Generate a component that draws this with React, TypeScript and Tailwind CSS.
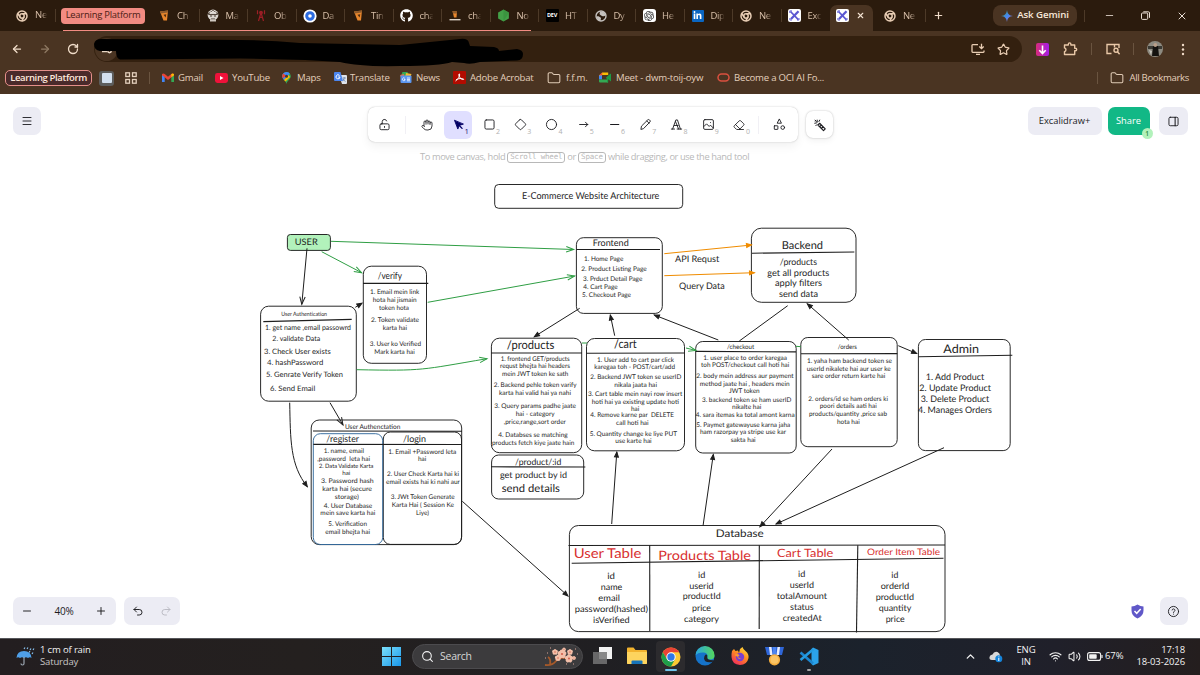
import React from "react";
import { FaGithub, FaLinkedinIn } from "react-icons/fa";
import { SiOpenai } from "react-icons/si";
import {
  ArrowLeft, ArrowRight, RotateCw, Star, X, Plus, Minus, Folder, Search, Wifi, Volume2, ChevronUp,
  Hand, Eraser, Undo2, Redo2, Menu,
} from "lucide-react";

const UI = "font-['Open_Sans','Noto_Sans',sans-serif]";

/* ---------- browser icons ---------- */

const ChromeMono = () => (
  <svg width="12" height="12" viewBox="0 0 24 24" fill="none" stroke="#e8cdb4" strokeWidth="3">
    <circle cx="12" cy="12" r="10" />
    <circle cx="12" cy="12" r="4.4" />
    <path d="M12 7.4H21M8 14.2 3.4 6.6M16 14.4 11.5 22" />
  </svg>
);

const Cup = () => (
  <svg width="11" height="13" viewBox="0 0 11 13">
    <path d="M1 2.500 9 1.500 8 11.500H4.500Z" fill="#e8862c" />
    <path d="M1 2.500 9 1.500 8.800 3.600 1.600 4.500Z" fill="#8d5a2c" />
    <path d="M4.500 5.800 7.300 5.300 6.600 8.500Z" fill="#4f2d10" />
  </svg>
);

const Face = () => (
  <svg width="12" height="13" viewBox="0 0 12 13">
    <circle cx="6" cy="6" r="5.4" fill="#d9d4ce" />
    <path d="M1 5 6 1.500l5 3.500-2 .6H3zM3 7h2M7 7h2M4 10h4" stroke="#493d33" fill="none" strokeWidth="1" />
    <path d="M3 4 6 2.500 9 4" stroke="#f2eee8" fill="none" />
    <path d="M3 11.500h6" stroke="#cfc8c0" strokeWidth="2" />
  </svg>
);

const Tower = () => (
  <svg width="12" height="13" viewBox="0 0 12 13" fill="none" stroke="#9c1f26" strokeWidth="1.200">
    <path d="M6 3.500 3.500 12M6 3.500 8.500 12M4.500 8.400h3M2.500 1.200v4M9.500 1.200v4" />
    <circle cx="6" cy="3.600" r="1.300" fill="#9c1f26" />
  </svg>
);

const BlueRing = () => (
  <svg width="14" height="14" viewBox="0 0 14 14">
    <circle cx="7" cy="7" r="6.600" fill="#fff" />
    <circle cx="7" cy="7" r="3.300" fill="#fff" stroke="#2b6be0" strokeWidth="3" />
  </svg>
);

const Lamp = () => (
  <svg width="12" height="12" viewBox="0 0 12 12">
    <path d="M3.500 1 8 1.500 7.500 7.500H5z" fill="#e8862c" />
    <path d="M3.500 1 8 1.500v2H4z" fill="#8d5a2c" />
    <path d="M.5 9.700h11" stroke="#d9cfc5" strokeWidth="1.400" />
  </svg>
);

const NodeHex = () => (
  <svg width="13" height="13" viewBox="0 0 13 13">
    <path d="m6.500.4 5.400 3v6.200l-5.400 3-5.400-3V3.400z" fill="#43a047" />
    <path d="m6.500.4 5.400 3-5.400 9.200z" fill="#388e3c" opacity=".7" />
  </svg>
);

const DevLogo = () => (
  <span className="flex h-[13px] w-[13px] items-center justify-center rounded-[1px] bg-black text-[5.500px] font-bold leading-none tracking-[-0.2px] text-white">
    DEV
  </span>
);

const Globe = () => (
  <svg width="12" height="12" viewBox="0 0 12 12">
    <circle cx="6" cy="6" r="5" fill="none" stroke="#c5c1bd" strokeWidth="1.400" />
    <path d="M1.500 6.500C3 6 4.500 6.500 6 8l-.5 3Q2 10.500 1.500 6.500zM5 1.500 8.500 1.700 11 5Q9 7 7 6T4.500 4z" fill="#c5c1bd" />
  </svg>
);

const OpenAi = () => (
  <span className="flex h-[13px] w-[13px] items-center justify-center rounded-[3px] bg-white text-[#333]">
    <SiOpenai size={10} />
  </span>
);

const LinkedIn = () => (
  <span className="flex h-3 w-3 items-center justify-center rounded-[1px] bg-[#0a66c2] text-white">
    <FaLinkedinIn size={9} />
  </span>
);

const ExcalidrawLogo = () => (
  <span className="flex h-[13px] w-[13px] items-center justify-center rounded-[2px] bg-white">
    <svg width="11" height="11" viewBox="0 0 11 11" fill="none" stroke="#5b57d1">
      <path d="M1.500 1.500 9.300 9.600" strokeWidth="1.700" />
      <path d="M9.500 1.300 2 9" strokeWidth="2.300" />
      <path d="M.8 3V.9H3M8 10h2V8M.9 8v2H3" strokeWidth=".9" />
    </svg>
  </span>
);

const leadingTabs: [React.ReactNode, string][] = [
  [<Cup />, "Ch"], [<Face />, "Ma"], [<Tower />, "Ob"], [<BlueRing />, "Da"], [<Cup />, "Tin"],
  [<FaGithub size={13} color="#fff" />, "cha"], [<Lamp />, "cha"], [<NodeHex />, "No"], [<DevLogo />, "HT"],
  [<Globe />, "Dy"], [<OpenAi />, "He"], [<LinkedIn />, "Dip"], [<ChromeMono />, "Ne"], [<ExcalidrawLogo />, "Exc"],
];

function Tab({ icon, label, last }: { icon: React.ReactNode; label: string; last?: boolean }) {
  return (
    <div className={`flex h-[13px] w-[48.5px] shrink-0 items-center ${last ? "" : "border-r border-[#4d3a28]"}`}>
      <span className="flex w-[26px] justify-center">{icon}</span>
      <span className="w-[15px] whitespace-nowrap text-[9.500px] leading-[13px] tracking-[-0.350px] text-[#d9c0aa] [mask-image:linear-gradient(to_right,black_45%,transparent_90%)]">
        {label}
      </span>
    </div>
  );
}

function TabStrip() {
  return (
    <div className="relative flex h-[31px] items-center bg-[#2b1b0d]">
      <div className="flex h-[13px] w-[56px] items-center border-r border-[#4d3a28] pl-4">
        <ChromeMono />
        <span className="ml-[7px] text-[9.500px] tracking-[-0.2px] text-[#d9c0aa] [mask-image:linear-gradient(to_right,black_60%,transparent)]">Ne</span>
      </div>
      <div className="ml-[5px] flex h-4 w-[84px] items-center justify-center rounded-[4px] bg-[#f28b82] text-[9.400px] tracking-[-0.22px] text-[#4b1c14]">
        Learning Platform
      </div>
      <div className="ml-[6px] flex">
        {leadingTabs.map(([icon, label], i) => <Tab key={i} icon={icon} label={label} last={i === 13} />)}
      </div>
      <div className="flex h-[26px] w-[43px] shrink-0 items-center gap-[7px] self-end rounded-t-[7px] bg-[#4a3422] pb-[5px] pl-[6px]">
        <ExcalidrawLogo />
        <X size={9} color="#f4e3d3" strokeWidth={3} />
      </div>
      <div className="ml-1 flex"><Tab icon={<ChromeMono />} label="Ne" /></div>
      <Plus size={11} color="#f0dcc9" strokeWidth={2.600} className="ml-[7px] shrink-0" />
      <div className="ml-auto flex items-center">
        <div className="flex h-[21px] w-[84px] items-center justify-center gap-[4px] rounded-[8px] bg-[#4a3422] text-[9.700px] font-semibold tracking-[-0.1px] text-[#f8e8da]">
          <svg width="12" height="12" viewBox="0 0 12 12">
            <defs>
              <linearGradient id="gem" x1="0" y1="0" x2="1" y2="1">
                <stop offset=".1" stopColor="#3c9a63" /><stop offset=".5" stopColor="#4488f0" /><stop offset=".9" stopColor="#9b72cb" />
              </linearGradient>
            </defs>
            <path d="M6 0C6.500 3.800 8.200 5.500 12 6 8.200 6.500 6.500 8.200 6 12 5.500 8.200 3.800 6.500 0 6 3.800 5.500 5.500 3.800 6 0Z" fill="url(#gem)" />
          </svg>
          Ask Gemini
        </div>
        <span className="ml-[7px] h-3 w-px bg-[#4d3a28]" />
        <Minus size={11} color="#eadfd5" strokeWidth={1.800} className="ml-[19px]" />
        <svg width="9" height="9" viewBox="0 0 9 9" fill="none" stroke="#eadfd5" className="ml-[26px]">
          <rect x=".5" y="2" width="6.200" height="6.400" rx="1" /><path d="M2.300.8h5a1.200 1.200 0 0 1 1.200 1.200v4.800" />
        </svg>
        <X size={12} color="#eadfd5" strokeWidth={2} className="ml-[26px] mr-[12px]" />
      </div>
      <div className="absolute bottom-0 left-[63px] h-px w-[468px] bg-[#f28b82]" />
    </div>
  );
}

function AddressBar() {
  return (
    <div className="relative flex h-9 items-center bg-[#4a3422]">
      <ArrowLeft size={12} color="#f0dcc9" strokeWidth={2.500} className="ml-[11px]" />
      <ArrowRight size={12} color="#8d7863" strokeWidth={2.500} className="ml-4" />
      <RotateCw size={12} color="#f0dcc9" strokeWidth={2.600} className="ml-4" />
      <div className="ml-[15px] flex h-[26px] w-[928px] items-center rounded-full bg-[#33200f] pr-3">
        <span className="ml-[1px] flex h-[23px] w-[23px] items-center justify-center rounded-full bg-[#4a3422]">
          <svg width="12" height="10" viewBox="0 0 12 10" fill="none" stroke="#e8d6c4" strokeWidth="1.500">
            <path d="M1 2.500h5M1 7.500h2" /><circle cx="8.500" cy="2.500" r="1.500" /><circle cx="8.500" cy="7" r="1.700" /><path d="M3 7.500h3" />
          </svg>
        </span>
        <svg width="14" height="13" viewBox="0 0 14 13" fill="none" stroke="#e9cdb3" strokeWidth="1.300" className="ml-auto">
          <path d="M7 1.700H1.700Q1 1.700 1 2.400v6.200q0 .7.7.7h10.600q.7 0 .7-.7V7.500M5 11.300h4M10.500.8v4.700M8.300 3.500l2.200 2.200 2.200-2.200" />
        </svg>
        <Star size={13} color="#e9cdb3" strokeWidth={2.200} className="ml-3" />
      </div>
      <svg width="13" height="13" viewBox="0 0 13 13" className="ml-[14px]">
        <defs><linearGradient id="dl" x1="0" x2="1"><stop stopColor="#d72c7a" /><stop offset="1" stopColor="#a51de8" /></linearGradient></defs>
        <rect width="13" height="13" rx="2" fill="url(#dl)" />
        <path d="M6.500 2.500v8M3.300 7.200l3.200 3.300 3.200-3.300" stroke="#fff" strokeWidth="1.600" fill="none" />
      </svg>
      <svg width="15" height="14" viewBox="0 0 15 14" fill="none" stroke="#e9c8a8" strokeWidth="1.400" strokeLinejoin="round" className="ml-[14px]">
        <path d="M1.500 3h3.800V2.200a1.300 1.300 0 0 1 2.600 0V3h3.800v3.200h.7a1.300 1.300 0 0 1 0 2.600h-.7V12.500H1.500V9.600a1.900 1.900 0 0 0 0-3.700z" />
      </svg>
      <span className="ml-[13px] h-3 w-px bg-[#6a5440]" />
      <svg width="14" height="12" viewBox="0 0 14 12" fill="none" stroke="#e9c8a8" strokeWidth="1.400" className="ml-[14px]">
        <path d="M5.500 10.500H1V1.500h12V5M8.500 1.500v3" /><circle cx="10" cy="7.300" r="2" /><path d="m11.400 8.800 2.200 2.400" />
      </svg>
      <span className="ml-[13px] h-3 w-px bg-[#6a5440]" />
      <svg width="16" height="16" viewBox="0 0 16 16" className="ml-[13px]">
        <circle cx="8" cy="8" r="8" fill="#8d8a80" />
        <path d="M1 5h14v3H1z" fill="#3b3a34" /><path d="M6 5h5l1 10H5z" fill="#14120f" />
        <circle cx="8.300" cy="4" r="1.900" fill="#b99e88" /><path d="M2 9l3 1-1 4z" fill="#c9c6bd" />
      </svg>
      <svg width="4" height="13" viewBox="0 0 4 13" fill="#f0dcc9" className="ml-[18px]">
        <circle cx="2" cy="2" r="1.200" /><circle cx="2" cy="6.500" r="1.200" /><circle cx="2" cy="11" r="1.200" />
      </svg>
      <svg className="absolute left-0 top-0" width="530" height="36" viewBox="0 31 530 36">
        <path d="M94 44Q95 39 101 39L240 40Q270 40 300 43Q350 44 400 45L460 39Q468 38 469 43L470 46 494 47Q499 48 499 51L517 49Q523 50 523 54Q523 60 517 60.500L480 62Q470 65 464 63L452 62Q440 66 400 66Q360 67 340 62L305 60 240 58.500 120 59.500Q116 58 116 51L100 51Q94 50 94 44Z" fill="#000" />
      </svg>
    </div>
  );
}

const GmailIcon = () => (
  <svg width="12" height="10" viewBox="0 0 12 10">
    <path d="M0 1.500V9h2.700V3.500z" fill="#4285f4" /><path d="M12 1.500V9H9.300V3.500z" fill="#34a853" />
    <path d="M0 2.200V1.300Q1-.3 2.700 1L6 3.700 9.300 1Q11-.3 12 1.300v.9L6 6.900z" fill="#ea4335" /><path d="M9.300 1Q11-.3 12 1.300v.9L9.300 4.300z" fill="#fbbc04" />
  </svg>
);
const YouTubeIcon = () => (
  <svg width="13" height="10" viewBox="0 0 13 10"><rect width="13" height="10" rx="2.400" fill="#f0123a" /><path d="m5 3 3.500 2L5 7z" fill="#fff" /></svg>
);
const MapsIcon = () => (
  <svg width="9" height="12" viewBox="0 0 9 12">
    <path d="M4.500 12C4 8.500.2 7.500.2 4.300A4.300 4.300 0 0 1 8.800 4.300C8.800 7.500 5 8.500 4.500 12Z" fill="#34a853" />
    <path d="M1.200 1.600A4.300 4.300 0 0 1 7.700 1.500L2 8Q.2 6 .2 4.300q0-1.700 1-2.700z" fill="#4285f4" /><path d="M.2 4.300q0-1.700 1-2.700L4 3.500 1 6.500Z" fill="#ea4335" />
    <path d="M2 8 6.500 3 8 5 3.500 9.500z" fill="#fbbc04" /><circle cx="4.500" cy="4.200" r="1.500" fill="#4c3827" />
  </svg>
);
const TranslateIcon = () => (
  <svg width="13" height="12" viewBox="0 0 13 12">
    <path d="M5 3h7q1 0 1 1v7q0 1-1 1H8z" fill="#dfe3ea" /><path d="M1 0h5.500L9 9H1Q0 9 0 8V1Q0 0 1 0z" fill="#4b85ee" />
    <path d="M5.500 3.500A2 2 0 1 0 6 5H4.200" stroke="#fff" fill="none" /><path d="M8.500 6h3.500M10.200 5v1c0 1.500-.7 2.500-1.500 3.200M9.200 7c.5 1.200 1.300 2 2.300 2.500" stroke="#5b78a8" strokeWidth=".7" fill="none" />
  </svg>
);
const NewsIcon = () => (
  <svg width="12" height="11" viewBox="0 0 12 11">
    <path d="M2.500 0h5L9 4H1z" fill="#34a853" /><path d="m6 1 5.500 1L10 6H5z" fill="#f6b92b" /><path d="M0 3l4-1v4H1z" fill="#ea6b4a" />
    <rect x=".5" y="3.500" width="11" height="7.500" rx="1" fill="#5b95ee" /><path d="M4.800 6.300a1.400 1.400 0 1 0 .4 1.200H4M7 6h3M7 7.400h3M7 8.800h3" stroke="#fff" strokeWidth=".8" fill="none" />
  </svg>
);
const AcrobatIcon = () => (
  <svg width="13" height="13" viewBox="0 0 13 13"><rect width="13" height="13" rx="1" fill="#b30b00" /><path d="M2.500 10c1-.3 5-4.500 4-7-.7-.8-1 1-.3 2.500S9 9 10.500 8.500 7 6.500 3 8.800" stroke="#fff" fill="none" /></svg>
);
const MeetIcon = () => (
  <svg width="12" height="11" viewBox="0 0 12 11">
    <path d="M0 3.500 3.200.5h6V3H3v2.500H0z" fill="#fbbc04" /><path d="M0 3.500 3.200.5v3z" fill="#ea4335" /><path d="M0 3.500h3v4H0z" fill="#4285f4" />
    <path d="M0 7.500h9v3H1q-1 0-1-1z" fill="#34a853" /><path d="M9.200.5v10H8V7.500l-1-2 3.500-3L12 1.600v8L9 7z" fill="#1e9a46" />
  </svg>
);
const OracleIcon = () => (
  <svg width="13" height="9" viewBox="0 0 13 9"><rect x="1" y="1" width="11" height="7" rx="3.500" fill="none" stroke="#d9503f" strokeWidth="1.500" /></svg>
);
const FolderIcon = () => <Folder size={14} color="#e0cbb6" strokeWidth={1.800} />;

const bookmarks: { icon: React.ReactNode; label: string; w: string; gap: string }[] = [
  { icon: <GmailIcon />, label: "Gmail", w: "w-[53px]", gap: "gap-[4px]" },
  { icon: <YouTubeIcon />, label: "YouTube", w: "w-[67px]", gap: "gap-1" },
  { icon: <MapsIcon />, label: "Maps", w: "w-[52px]", gap: "gap-[6px]" },
  { icon: <TranslateIcon />, label: "Translate", w: "w-[66px]", gap: "gap-[3px]" },
  { icon: <NewsIcon />, label: "News", w: "w-[53px]", gap: "gap-[4px]" },
  { icon: <AcrobatIcon />, label: "Adobe Acrobat", w: "w-[94px]", gap: "gap-1" },
  { icon: <FolderIcon />, label: "f.f.m.", w: "w-[52px]", gap: "gap-[5px]" },
  { icon: <MeetIcon />, label: "Meet - dwm-toij-oyw", w: "w-[118px]", gap: "gap-[5px]" },
  { icon: <OracleIcon />, label: "Become a OCI AI Fo...", w: "w-[120px]", gap: "gap-1" },
];

function BookmarkBar() {
  return (
    <div className="flex h-[27px] items-center bg-[#4a3422] pb-[5px] text-[9.600px] tracking-[-0.220px] text-[#e3cfbc]">
      <div className="ml-[5px] flex h-4 w-[87px] items-center justify-center whitespace-nowrap rounded-[5px] border border-[#e58f8a] bg-[#4a2a2a] text-[9.500px] font-semibold tracking-[-0.36px] text-[#ffe9dd]">
        Learning Platform
      </div>
      <span className="ml-[7px] flex h-[15px] w-[15px] items-center justify-center rounded-[3px] bg-[#5d5d5c]">
        <span className="h-[10px] w-[10px] rounded-[1px] bg-[#d3e0ee]" />
      </span>
      <svg width="12" height="12" viewBox="0 0 12 12" fill="none" stroke="#e3cfbc" strokeWidth="1.300" className="ml-[11px]">
        <rect x=".8" y=".8" width="3.700" height="3.700" /><rect x="7.500" y=".8" width="3.700" height="3.700" /><rect x=".8" y="7.500" width="3.700" height="3.700" /><rect x="7.500" y="7.500" width="3.700" height="3.700" />
      </svg>
      <span className="ml-3 mr-3 h-3 w-px bg-[#6a5440]" />
      {bookmarks.map((b) => (
        <div key={b.label} className={`flex shrink-0 items-center whitespace-nowrap ${b.w} ${b.gap}`}>{b.icon}<span>{b.label}</span></div>
      ))}
      <span className="ml-auto h-3 w-px bg-[#6a5440]" />
      <div className="ml-3 mr-[11px] flex items-center gap-[5px] whitespace-nowrap tracking-[-0.340px]"><FolderIcon />All Bookmarks</div>
    </div>
  );
}

/* ---------- diagram ---------- */

const INK = "#1e1e1e";

type Label = [text: string, x1: number, x2: number, baseline: number, size?: number, color?: string];

const labels: Label[] = [
  ["E-Commerce Website Architecture", 522, 659.3, 198.7, 9.5],
  ["USER", 294.7, 317.7, 244.6, 9],
  ["/verify", 377.7, 402, 278.7, 9.5],
  ["1. Email mein link", 370, 419.3, 294.3], ["hota hai jismain", 372.7, 416.7, 301.9], ["token hota", 379, 409, 309.7],
  ["2. Token validate", 371, 419, 322.3], ["karta hai", 382.7, 407, 329.8],
  ["3. User ko Verified", 369.7, 421, 346], ["Mark karta hai", 374.3, 414.7, 353.5],
  ["User Authentication", 281.3, 327, 315.7, 5.8],
  ["1. get name ,email passowrd", 265, 351, 330, 7.2], ["2. validate Data", 272.3, 320.3, 341, 7.2],
  ["3. Check User exists", 264, 330.7, 353.7, 7.4], ["4. hashPassword", 267, 323.3, 364.8, 7.4],
  ["5. Genrate Verify Token", 266, 343, 376.8, 7.4], ["6. Send Email", 270, 315.3, 391, 7.4],
  ["User Authenctation", 345, 400.3, 429.4, 6.6], ["/register", 326.3, 359, 441.7, 9.2], ["/login", 403, 426, 442, 9.2],
  ["1. name, email", 323.7, 364, 453.3], [",password  leta hai", 317.3, 370, 460.5],
  ["2. Data Validate Karta", 319, 373.3, 468.3, 6], ["hai", 342.3, 350.3, 475, 6],
  ["3. Password hash", 321, 373.7, 482.5], ["karta hai (secure", 322.3, 372, 491], ["storage)", 334.7, 359, 499.2],
  ["4. User Database", 323.7, 372.3, 507.7], ["mein save karta hai", 320.3, 375.3, 515],
  ["5. Verification", 328.3, 367, 526.3], ["email bhejta hai", 325.3, 370, 533.5],
  ["1. Email +Password leta", 388.3, 456.3, 453.5], ["hai", 418, 426.3, 461],
  ["2. User Check Karta hai ki", 387, 459, 476.3], ["email exists hai ki nahi aur", 386, 460, 483.7],
  ["3. JWt Token Generate", 390.7, 454.7, 499.3], ["Karta Hai ( Session Ke", 391.7, 454, 507], ["Liye)", 416, 429, 514.7],
  ["Frontend", 592.7, 628.7, 245.7, 9.2],
  ["1. Home Page", 584, 623.3, 260.7], ["2. Product Listing Page", 581.3, 646.7, 270.7], ["3. Prduct Detail Page", 583, 642.3, 280.7],
  ["4. Cart Page", 583.3, 617.7, 288.8], ["5. Checkout Page", 582, 631, 297],
  ["API Requst", 675, 719.3, 261.5, 9], ["Query Data", 679, 724.7, 289, 9],
  ["/products", 506.7, 554.3, 348.5, 12],
  ["1. frontend GET/products", 500.7, 569.7, 360.7], ["requst bhejta hai headers", 500, 570, 368.4], ["mein JWT token ke sath", 502, 568.3, 376],
  ["2. Backend pehle token varify", 493.7, 576.7, 387.4], ["karta hai valid hai ya nahi", 499, 571, 394.7],
  ["3. Query params padhe jaate", 494.3, 576, 408.3], ["hai - category", 515.7, 554.7, 415.7], [",price,range,sort order", 503.7, 566, 423.5],
  ["4. Databses se matching", 498.3, 567.7, 437], ["products fetch kiye jaate hain", 492, 574.3, 444.5],
  ["/product/:id", 515, 561.3, 464.6, 8.8], ["get product by id", 500, 567, 478, 8.8], ["send details", 501.7, 560, 492.3, 10.8],
  ["/cart", 614, 636.7, 348.3, 12],
  ["1. User add to cart par click", 597, 674, 361.7], ["karegaa toh - POST/cart/add", 594.3, 675, 369.3],
  ["2. Backend JWT token se userID", 590.3, 681.3, 379.4], ["nikala jaata hai", 614.3, 657, 387],
  ["3. Cart table mein nayi row insert", 588, 682.3, 396.4], ["hoti hai ya existing update hoti", 591.7, 679, 404], ["hai", 631, 639.3, 411.4],
  ["4. Remove karne par  DELETE", 590.3, 674, 417.3], ["call hoti hai", 616, 648.7, 424.6],
  ["5. Quantity change ke liye PUT", 589.7, 677, 435.8], ["use karte hai", 615.3, 651.7, 443.2],
  ["Backend", 781.7, 823, 248.5, 11], ["/products", 779.7, 817, 264.5, 9], ["get all products", 767.3, 829.3, 275.5, 9],
  ["apply filters", 775, 822, 286.3, 9], ["send data", 779, 818, 297.3, 9],
  ["/checkout", 727, 754.3, 349, 6.4],
  ["1. user place to order karegaa", 703.3, 787, 359.5], ["toh POST/checkout call hoti hai", 701, 789.3, 367.1],
  ["2. body mein address aur payment", 696.3, 793.7, 377.8], ["method jaate hai , headers mein", 699.7, 789.7, 385.5], ["JWT token", 729, 759.7, 393.3],
  ["3. backend token se ham userID", 702, 791.3, 401.5], ["nikalte hai", 732, 761.3, 409.2],
  ["4. sara itemas ka total amont karna", 695.7, 794.7, 417.4],
  ["5. Paymet gatewayuse karna jaha", 696.3, 790.3, 426.7], ["ham razorpay ya stripe use kar", 700, 786, 434.3], ["sakta hai", 730.7, 755.7, 442.3],
  ["/orders", 837.7, 857, 348.7, 6.4],
  ["1. yaha ham backend token se", 807, 892, 362.8], ["userId nikalete hai aur user ke", 806.7, 890.7, 370.5], ["sare order return karte hai", 811.7, 885.3, 378.4],
  ["2. orders/id se ham orders ki", 808.3, 888, 400.5], ["poori details aati hai", 819.7, 876.7, 408.1],
  ["products/quantity ,price sab", 809, 887, 416], ["hota hai", 837, 859.7, 423.5],
  ["Admin", 943.3, 979, 353, 12],
  ["1. Add Product", 925.7, 984.3, 379.5, 9], ["2. Update Product", 919.3, 991, 390.5, 9],
  ["3. Delete Product", 920.7, 989.3, 401.5, 9], ["4. Manages Orders", 918, 992, 412.5, 9],
  ["Database", 715.7, 763.7, 537, 10.6],
  ["User Table", 573.7, 641.3, 558.3, 13.5, "#d8302f"], ["Products Table", 658.3, 751, 559.7, 13, "#d8302f"],
  ["Cart Table", 777, 833.3, 557.3, 11.5, "#d8302f"], ["Order Item Table", 867, 940, 555, 9, "#d8302f"],
  ["id", 607.3, 615, 579.3, 8.8], ["name", 600.7, 622.3, 590.3, 8.8], ["email", 598.3, 620, 601.2, 8.8],
  ["password(hashed)", 574.7, 648, 612.4, 8.8], ["isVerified", 593, 629.7, 623, 8.8],
  ["id", 698, 705.3, 577.5, 8.8], ["userid", 689.3, 713.7, 588.5, 8.8], ["productId", 682.7, 720.7, 599.3, 8.8],
  ["price", 692, 711, 610.5, 8.8], ["category", 684, 719, 621.5, 8.8],
  ["id", 798, 805.3, 577.3, 8.8], ["userId", 789.7, 814, 588.3, 8.8], ["totalAmount", 776.7, 827, 598.9, 8.8],
  ["status", 790, 813.7, 610, 8.8], ["createdAt", 782.7, 821.7, 620.9, 8.8],
  ["id", 891.3, 898.3, 577.8, 8.8], ["orderId", 880.7, 909.3, 588.5, 8.8], ["productId", 875.7, 914, 599.5, 8.8],
  ["quantity", 878.7, 911.3, 610.5, 8.8], ["price", 885.7, 904.7, 621.5, 8.8],
];

type Box = [x1: number, y1: number, x2: number, y2: number, r: number, stroke?: string, fill?: string];

const boxes: Box[] = [
  [494.7, 184.5, 682.7, 208.3, 4],
  [287.4, 234.5, 330.4, 250.4, 3, INK, "#b2f2bb"],
  [363.3, 266.2, 426.5, 363.3, 8], [260.6, 306.2, 356.3, 401.2, 8],
  [311.2, 420, 461.7, 544.6, 8], [383.3, 432, 461.5, 544.4, 7], [313.3, 433.7, 382.7, 544.5, 7, "#34699c"],
  [576.4, 237.7, 662.3, 313.4, 7], [491.4, 338.2, 581.7, 452.7, 8], [491.6, 455, 583.7, 499, 7],
  [586.5, 338.5, 684.5, 450.8, 8], [751.4, 228.2, 856, 302.3, 10], [695.7, 341.5, 796.2, 453, 7],
  [800.8, 337.5, 897.2, 446.7, 7], [918.4, 339.5, 1010.2, 450.6, 7], [569.4, 525.5, 945, 631.6, 9],
];

type Seg = [x1: number, y1: number, x2: number, y2: number];

const rules: Seg[] = [
  [363, 283.4, 428.3, 283.4], [263.3, 321.6, 351.7, 319.4], [313, 431, 462, 431.3], [313.3, 444.4, 461.7, 444.5],
  [576.3, 249.5, 660, 249.5], [491, 353, 582, 353], [491, 466.8, 585.3, 467], [586.5, 353.2, 684.5, 353],
  [752, 253.2, 854.3, 252], [695.7, 351.4, 796, 351.9], [801, 353.7, 897.3, 353.6], [918.3, 356.7, 1012.3, 355.2],
  [568.5, 545.5, 945, 545], [571.7, 563.2, 943.5, 558.3], [649.7, 545.3, 649.8, 631], [759.3, 545.3, 759.2, 629], [857.8, 545.3, 856.5, 632.5],
];

type Link = { d: string; tip: [x: number, y: number, angle: number]; color?: string; open?: boolean };

const straight = (x1: number, y1: number, x2: number, y2: number, color?: string, open?: boolean): Link => ({
  d: `M${x1} ${y1}L${x2} ${y2}`,
  tip: [x2, y2, (Math.atan2(y2 - y1, x2 - x1) * 180) / Math.PI],
  color,
  open,
});

const GREEN = "#2f9e44";
const ORANGE = "#f08c00";

const links: Link[] = [
  straight(331, 241.3, 573.7, 249.5, GREEN, true), straight(321.7, 251.7, 361.7, 272.7, GREEN, true),
  straight(427.7, 302.3, 574.7, 276, GREEN, true),
  { d: "M356.700 369.700C425 371 420 370 487 358.700", tip: [487, 358.7, -10], color: GREEN, open: true },
  straight(686, 348, 696, 350.5, GREEN, true),
  straight(664.3, 253.7, 751.5, 245, ORANGE), straight(664.3, 275.7, 754.5, 272.7, ORANGE),
  straight(307, 248.3, 301.8, 304.3, INK, true), straight(355.3, 307.3, 362, 303.2),
  straight(330, 402.7, 343, 425, INK, true),
  { d: "M289.700 402.700C290.500 440 290 465 307.300 486.700", tip: [307.3, 486.7, 55] },
  straight(462.3, 501.3, 568, 596), straight(579.7, 308.3, 534.3, 336.7), straight(614.7, 335.7, 610.3, 315),
  straight(718.3, 340, 654.3, 315), straight(848.7, 340, 807.3, 303.8), straight(898.3, 345.7, 916.7, 353.5),
  straight(611.7, 524, 616.8, 452), straight(703, 526, 713.3, 454.5), straight(832, 449, 760, 526.7), straight(944, 447.7, 776, 524),
];

function Diagram() {
  return (
    <svg className="absolute inset-0" width="1200" height="544" viewBox="0 94 1200 544" fontFamily="Lato, 'Open Sans', sans-serif" textRendering="geometricPrecision">
      {boxes.map(([x1, y1, x2, y2, r, stroke, fill], i) => (
        <rect key={i} x={x1} y={y1} width={x2 - x1} height={y2 - y1} rx={r} fill={fill ?? "none"} stroke={stroke ?? INK} strokeWidth=".95" />
      ))}
      {rules.map(([x1, y1, x2, y2], i) => <line key={i} x1={x1} y1={y1} x2={x2} y2={y2} stroke={INK} strokeWidth="1.100" />)}
      <path d="M739.300 341 787.700 305.700" stroke={INK} />
      <path d="M582 343h5M796 346.300l5 .4" stroke={GREEN} />
      {links.map((l, i) => (
        <g key={i} fill="none" stroke={l.color ?? INK} strokeWidth="1">
          <path d={l.d} />
          <g transform={`translate(${l.tip[0]} ${l.tip[1]}) rotate(${l.tip[2]})`}>
            {l.open ? <path d="M-7.500-2.700 0 0-7.500 2.700" /> : <path d="M-5-2 0 0-5 2Z" fill={l.color ?? INK} />}
          </g>
        </g>
      ))}
      {labels.map(([text, x1, x2, y, size, color], i) => (
        <text key={i} x={x1} y={y} fontSize={size ?? 6.5} textLength={x2 - x1} lengthAdjust="spacingAndGlyphs" fill={color ?? INK} xmlSpace="preserve">{text}</text>
      ))}
    </svg>
  );
}

/* ---------- editor chrome ---------- */

const Ico = ({ children, size = 13 }: { children: React.ReactNode; size?: number }) => (
  <svg width={size} height={size} viewBox="0 0 20 20" fill="none" stroke="#1b1b1f" strokeWidth="1.400" strokeLinecap="round" strokeLinejoin="round">{children}</svg>
);

const tools: { n: string; icon: React.ReactNode }[] = [
  { n: "", icon: <Hand size={12} color="#1b1b1f" strokeWidth={1.700} /> },
  { n: "1", icon: <Ico><path d="M4 4l5 13 2-5.500L17 9.500z" fill="#030064" stroke="#030064" /><path d="m11.500 12 4 4" stroke="#030064" strokeWidth="2" /></Ico> },
  { n: "2", icon: <Ico><rect x="3" y="3" width="14" height="14" rx="2" /></Ico> },
  { n: "3", icon: <Ico><path d="M8.700 2.700 2.700 8.700q-1.300 1.300 0 2.600l6 6q1.300 1.300 2.600 0l6-6q1.300-1.300 0-2.600l-6-6q-1.300-1.300-2.600 0Z" /></Ico> },
  { n: "4", icon: <Ico><circle cx="10" cy="10" r="7.800" /></Ico> },
  { n: "5", icon: <Ico><path d="M4 10h12.500M13 6.500l3.500 3.500-3.500 3.500" /></Ico> },
  { n: "6", icon: <Ico><path d="M4 10h12.500" strokeWidth="1.900" /></Ico> },
  { n: "7", icon: <Ico><path d="m3 17 .8-4.500L13.500 2.900q1.300-1.200 2.700.1l.6.6q1.200 1.300 0 2.600L7.300 16z M12 4.500l3.500 3.500" /></Ico> },
  { n: "8", icon: <Ico><path d="M2 17h5M11 17h7M4 17 9 3h2.500L16 17M6.500 11.500h6M8.500 5.500 13.200 17" /></Ico> },
  { n: "9", icon: <Ico><rect x="2.500" y="2.500" width="15" height="15" rx="2" /><path d="m3 13 4-4 4 4 2-2 4 4M13 7h.1" /></Ico> },
  { n: "0", icon: <Eraser size={12} color="#1b1b1f" strokeWidth={1.700} /> },
];

function Toolbar() {
  return (
    <div className="flex h-[35px] w-[430px] items-center rounded-[7px] bg-white pl-[3px] shadow-[0_0_1px_rgba(0,0,0,.25),0_0_3px_rgba(0,0,0,.08),0_5px_10px_rgba(0,0,0,.05)]">
      <div className="flex w-[27px] justify-center">
        <Ico><rect x="3" y="9" width="14" height="9" rx="2" /><path d="M6.500 9V5.500a3.500 3.500 0 0 1 6.800-1M10 13v1.500" /></Ico>
      </div>
      <span className="ml-[7px] h-[18px] w-px bg-[#f1f0f5]" />
      <div className="ml-[7px] flex gap-[3.750px]">
        {tools.map((t, i) => (
          <div key={i} className={`relative flex h-7 w-[27.500px] items-center justify-center rounded-[6px] ${i === 1 ? "bg-[#e0dfff]" : ""}`}>
            {t.icon}
            <span className={`absolute bottom-[4px] right-[3px] text-[7px] leading-none ${i === 1 ? "text-[#030064]" : "text-[#b0b0b0]"}`}>{t.n}</span>
          </div>
        ))}
      </div>
      <span className="ml-[5px] h-[18px] w-px bg-[#f1f0f5]" />
      <span className="ml-[14px]">
        <Ico><path d="M10 2 13 8H7z" /><rect x="2" y="12" width="5.500" height="5.500" rx=".5" /><circle cx="15" cy="14.700" r="2.800" /></Ico>
      </span>
    </div>
  );
}

const chip = "flex h-7 items-center rounded-[7px] bg-[#ececf4] text-[#1b1b1f]";
const kbd = "mx-[2px] inline-flex h-[11px] items-center rounded-[3px] border border-[#b8b8b8] px-[2px] font-['DejaVu_Sans_Mono','Liberation_Mono',monospace] text-[7.500px] leading-none";

function Editor() {
  return (
    <main className="relative flex h-[544px] flex-col justify-between bg-white px-[12.500px] pb-[13px] pt-[13px]">
      <Diagram />
      <div className="relative">
        <div className="flex items-start">
          <div className={`${chip} w-7 justify-center`}><Menu size={12} strokeWidth={1.800} /></div>
          <div className="ml-[327.500px]"><Toolbar /></div>
          <div className="ml-2 mt-[4px] flex h-[27px] w-[27px] items-center justify-center rounded-[7px] bg-white shadow-[0_0_2px_rgba(0,0,0,.25),0_3px_6px_rgba(0,0,0,.05)]">
            <Ico size={14}>
              <path d="m7 10 2.500-2.500 8 8-2.500 2.500zM9.500 12.500 12 10M12 15l2.500-2.500" strokeWidth="1.600" /><path d="M6 3v3M3 4.500h0M2.500 7.500l2.500-.5M9.500 3 8.500 5M3 3l1.800 1.800M4 11l1.500-1.500" />
            </Ico>
          </div>
          <div className="ml-auto flex text-[9.300px]">
            <div className={`${chip} w-[74px] justify-center`}>Excalidraw+</div>
            <div className="relative ml-[6px] flex h-7 w-[42px] items-center justify-center rounded-[7px] bg-[#12b886] text-white">
              Share
              <span className="absolute -bottom-[4px] -right-[3px] flex h-[11px] w-[11px] items-center justify-center rounded-full bg-[#b2f2bb] text-[6.500px] font-semibold text-[#2b8a3e]">1</span>
            </div>
            <div className={`${chip} ml-[9px] w-[29px] justify-center`}><Ico><rect x="3" y="3.500" width="14" height="13" rx="2" /><path d="M12.500 3.500v13" strokeWidth="1.600" /></Ico></div>
          </div>
        </div>
        <p className="ml-[407.500px] mt-[7px] flex h-4 items-center whitespace-nowrap text-[9.300px] tracking-[-0.400px] text-[#b8b8b8]">
          To move canvas, hold <span className={`${kbd} w-[58px] justify-center tracking-[-0.170px]`}>Scroll wheel</span> or <span className={`${kbd} w-[28px] justify-center tracking-[-0.170px]`}>Space</span> while dragging, or use the hand tool
        </p>
      </div>
      <div className="relative flex items-center">
        <div className={`${chip} w-[103px] justify-between pl-[8px] pr-[8px] text-[10px] tracking-[-0.2px]`}>
          <Minus size={12} strokeWidth={1.900} /><span>40%</span><Plus size={12} strokeWidth={1.900} />
        </div>
        <div className={`${chip} ml-2 w-14 justify-center gap-[16px]`}>
          <Undo2 size={12} strokeWidth={1.900} /><Redo2 size={12} strokeWidth={1.900} className="text-[#b9b9c2]" />
        </div>
        <svg width="13" height="15" viewBox="0 0 13 15" className="ml-auto mr-4">
          <path d="M6.500.5q3 1.800 6 2v4q0 5.500-6 8-6-2.500-6-8v-4q3-.2 6-2Z" fill="#6058c8" /><path d="m3.500 7 2.200 2.300L9.700 5" stroke="#fff" strokeWidth="1.500" fill="none" />
        </svg>
        <div className={`${chip} w-7 justify-center`}>
          <Ico><circle cx="10" cy="10" r="7.800" /><path d="M10 14v.1M10 11.500q0-1 1-1.500c2.300-1.200 1-4-1-4-1.200 0-2.200.8-2.200 1.700" /></Ico>
        </div>
      </div>
    </main>
  );
}

/* ---------- taskbar ---------- */

const Blossom = () => (
  <svg width="36" height="21" viewBox="0 0 36 21">
    <path d="M3 19Q10 20 14 15T26 13M8 18Q9 13 6 11" stroke="#a5592a" strokeWidth="1.800" fill="none" />
    {[[13, 6, 3], [20, 8, 4.6], [16, 12, 3.2], [28, 6, 3], [27, 12.500, 4.2], [32, 12, 2], [22, 3.500, 2]].map(([x, y, r], i) => (
      <g key={i}>
        {[0, 72, 144, 216, 288].map((a) => <circle key={a} cx={x} cy={y - r * 0.5} r={r * 0.5} fill="#f3bfa9" transform={`rotate(${a} ${x} ${y})`} />)}
        <circle cx={x} cy={y} r={r * 0.24} fill="#d2604c" />
      </g>
    ))}
    <path d="M8 2h1M5 7h1M3 12h1M33 3h1M35 8h1M24 18h1M31 18h1" stroke="#d9a79a" />
  </svg>
);

const ChromeColor = () => (
  <svg width="20" height="20" viewBox="0 0 20 20">
    <circle cx="10" cy="10" r="9.500" fill="#fcc934" />
    <path d="M1.800 5.200A9.500 9.500 0 0 1 18.200 5.200H10L6 12.300z" fill="#ea4335" /><path d="M1.800 5.200 6 12.300 10 14.500 10 19.500A9.500 9.500 0 0 1 1.800 5.200Z" fill="#1e9e4a" /><path d="M10 19.500 14 12.300 8 14.300z" fill="#1e9e4a" />
    <circle cx="10" cy="10" r="4.700" fill="#fff" /><circle cx="10" cy="10" r="3.700" fill="#2f78e8" />
  </svg>
);

const EdgeIcon = () => (
  <svg width="20" height="20" viewBox="0 0 20 20">
    <defs><linearGradient id="edge" x1="0" y1="0" x2="1" y2="0"><stop stopColor="#2aa6e0" /><stop offset="1" stopColor="#54d65c" /></linearGradient></defs>
    <circle cx="10" cy="10" r="9.500" fill="#1573c9" />
    <path d="M.5 9.500A9.500 9.500 0 0 1 19.500 9.500Q19.500 13.500 15 13.500 11 13.500 12.500 11 13 7 9 6.500 3 6 .5 9.500Z" fill="url(#edge)" />
    <path d="M12.200 11Q12 14.500 19 14.200L17.500 16Q10 17.500 9 12.500 9 9.500 11 8.200 13 9.300 12.200 11Z" fill="#1f2228" />
  </svg>
);

const FirefoxIcon = () => (
  <svg width="20" height="20" viewBox="0 0 20 20">
    <defs><linearGradient id="fox" x1=".8" y1="0" x2=".2" y2="1"><stop stopColor="#ffdf3a" /><stop offset=".45" stopColor="#ff8a23" /><stop offset="1" stopColor="#f0265f" /></linearGradient></defs>
    <path d="M2 5 4 3 5.500 5 8 4.500 9 7 10 3 12.500 1Q13 3.500 16 5.500 19 8 18.500 12 17 19 10 19 2 18.500 1.500 11 1.300 8 2 5Z" fill="url(#fox)" />
    <circle cx="10" cy="11" r="4.200" fill="#7a3fd0" /><path d="M4.500 9q3-2 5 .500L7.500 11Q8 13.500 11 13" fill="#ff9a2b" />
  </svg>
);

const Medal = () => (
  <svg width="19" height="19" viewBox="0 0 19 19">
    <path d="M0 0h19L17 8H2z" fill="#2f66d8" /><path d="M4 0h2.500l1 8H5zM12.500 0H15l-1 8h-2.500z" fill="#e9eefb" /><path d="M8 0h3v8H8z" fill="#4d85ee" />
    <circle cx="9.500" cy="12.800" r="5.600" fill="#f6ae3c" /><circle cx="9.500" cy="12.800" r="4" fill="#fbc565" />
  </svg>
);

const VsCode = () => (
  <svg width="20" height="19" viewBox="0 0 20 19">
    <path d="M14 .5 19.500 3v13L14 18.500 12.500 17V2z" fill="#2ba3ea" />
    <path d="M1.500 5.500 14 16.500" stroke="#1c86cf" strokeWidth="2.600" /><path d="M1.500 13 14 2.500" stroke="#249be0" strokeWidth="2.600" />
  </svg>
);

function Taskbar() {
  return (
    <footer className="flex h-[37px] items-center border-t border-[#55565a] bg-[linear-gradient(90deg,#231e20,#24201f_25%,#201f22_50%,#1b222c_72%,#20202a_88%,#241e1e)] pb-[1.500px] text-[9.500px] leading-[12.500px] tracking-[-0.1px] text-[#f2f2f2]">
      <div className="flex w-[381px] items-center pl-4">
        <svg width="19" height="20" viewBox="0 0 19 20">
          <path d="M.5 12Q1 5 8 5T15.500 12Q14 10.500 12 12 10 10.500 8 12 6 10.500 4 12 2 10.500.5 12Z" fill="#4f9fe8" />
          <path d="M8 11v6.500q0 1.500-1.500 1.500T5 17.500" stroke="#9ba5b0" fill="none" strokeWidth="1.200" />
          <path d="m8 3 1-1.500M11 3l1-1.500M14 4l1-1.500M13 6.500l1-1.500M16 8l1-1.500M17 4l1-1.500" stroke="#8cc7f5" strokeWidth="1.100" />
        </svg>
        <div className="ml-[5px] tracking-[-0.150px]"><div>1 cm of rain</div><div className="text-[#c9c6c6]">Saturday</div></div>
      </div>
      <svg width="19" height="19" viewBox="0 0 19 19" className="ml-px">
        <defs><linearGradient id="win" x1="0" y1="0" x2="1" y2="1"><stop stopColor="#7be0fb" /><stop offset="1" stopColor="#1997ea" /></linearGradient></defs>
        <path d="M0 0h9v9H0zM10 0h9v9h-9zM0 10h9v9H0zM10 10h9v9h-9z" fill="url(#win)" />
      </svg>
      <div className="ml-[11px] flex h-[25px] w-[171px] items-center rounded-full border border-[#4c4b4e] bg-[#3c3b3d] pl-[8px] pr-1 text-[10.500px] text-[#d7d7d7]">
        <Search size={13} color="#f2f2f2" strokeWidth={2} /><span className="ml-[6px] tracking-[-0.250px]">Search</span><span className="ml-auto"><Blossom /></span>
      </div>
      <svg width="20" height="18" viewBox="0 0 20 18" className="ml-[10px]">
        <path d="M6 0h13v12H6z" fill="#f2f2f2" /><path d="M0 5h14v12H0z" fill="#757575" opacity=".85" />
      </svg>
      <svg width="20" height="18" viewBox="0 0 20 18" className="ml-[14px]">
        <path d="M0 1.500Q0 .5 1 .5h5.500L8.500 3H19q1 0 1 1v12q0 1-1 1H1q-1 0-1-1z" fill="#f2b32e" /><path d="M0 5h20v11q0 1-1 1H1q-1 0-1-1z" fill="#fdd45e" /><path d="M4.500 17v-2.500q0-1 1-1h9q1 0 1 1V17z" fill="#1673b8" />
      </svg>
      <div className="ml-[9px] flex h-[31px] w-[29px] flex-col items-center rounded-[4px] bg-[#2c2b2e] pt-[6px]">
        <ChromeColor /><span className="mt-[2px] h-[2px] w-3 rounded-full bg-[#6fc4ea]" />
      </div>
      <span className="ml-[10px]"><EdgeIcon /></span>
      <span className="ml-[15px]"><FirefoxIcon /></span>
      <span className="ml-[15px]"><Medal /></span>
      <div className="ml-[15px] flex flex-col items-center pt-[5px]"><VsCode /><span className="mt-[3px] h-[2px] w-1 rounded-full bg-[#a5a5a5]" /></div>
      <div className="ml-auto flex items-center pr-[15px]">
        <ChevronUp size={13} strokeWidth={2.500} />
        <svg width="14" height="13" viewBox="0 0 14 13" className="ml-[12px]">
          <path d="M3 10Q0 10 .5 7 1 4.500 3.500 4.500 5 1 8.500 2 11 3 11 5.500L12 10z" fill="#d8d8d8" /><circle cx="9.800" cy="8.800" r="3.500" fill="#1585dc" /><path d="M9.800 8v3M9.800 6.500v.8" stroke="#fff" />
        </svg>
        <div className="ml-[12px] w-[22px] text-center text-[9.600px]"><div>ENG</div><div>IN</div></div>
        <Wifi size={13} strokeWidth={2.100} className="ml-[12px]" />
        <Volume2 size={13} strokeWidth={1.900} className="ml-[6px]" />
        <svg width="16" height="9" viewBox="0 0 16 9" className="ml-[6px]">
          <rect x=".6" y=".6" width="13" height="7.800" rx="2" fill="none" stroke="#f2f2f2" strokeWidth="1.100" /><rect x="2.200" y="2.200" width="7.500" height="4.600" rx=".8" fill="#f2f2f2" /><path d="M15 3v3" stroke="#f2f2f2" strokeWidth="1.200" />
        </svg>
        <span className="ml-[2px] w-[20px]">67%</span>
        <div className="ml-[10px] w-[50px] whitespace-nowrap text-right"><div>17:18</div><div>18-03-2026</div></div>
      </div>
    </footer>
  );
}

export default function App() {
  return (
    <div className={`flex h-[675px] w-[1200px] flex-col overflow-hidden ${UI}`}>
      <TabStrip />
      <AddressBar />
      <BookmarkBar />
      <Editor />
      <Taskbar />
    </div>
  );
}
